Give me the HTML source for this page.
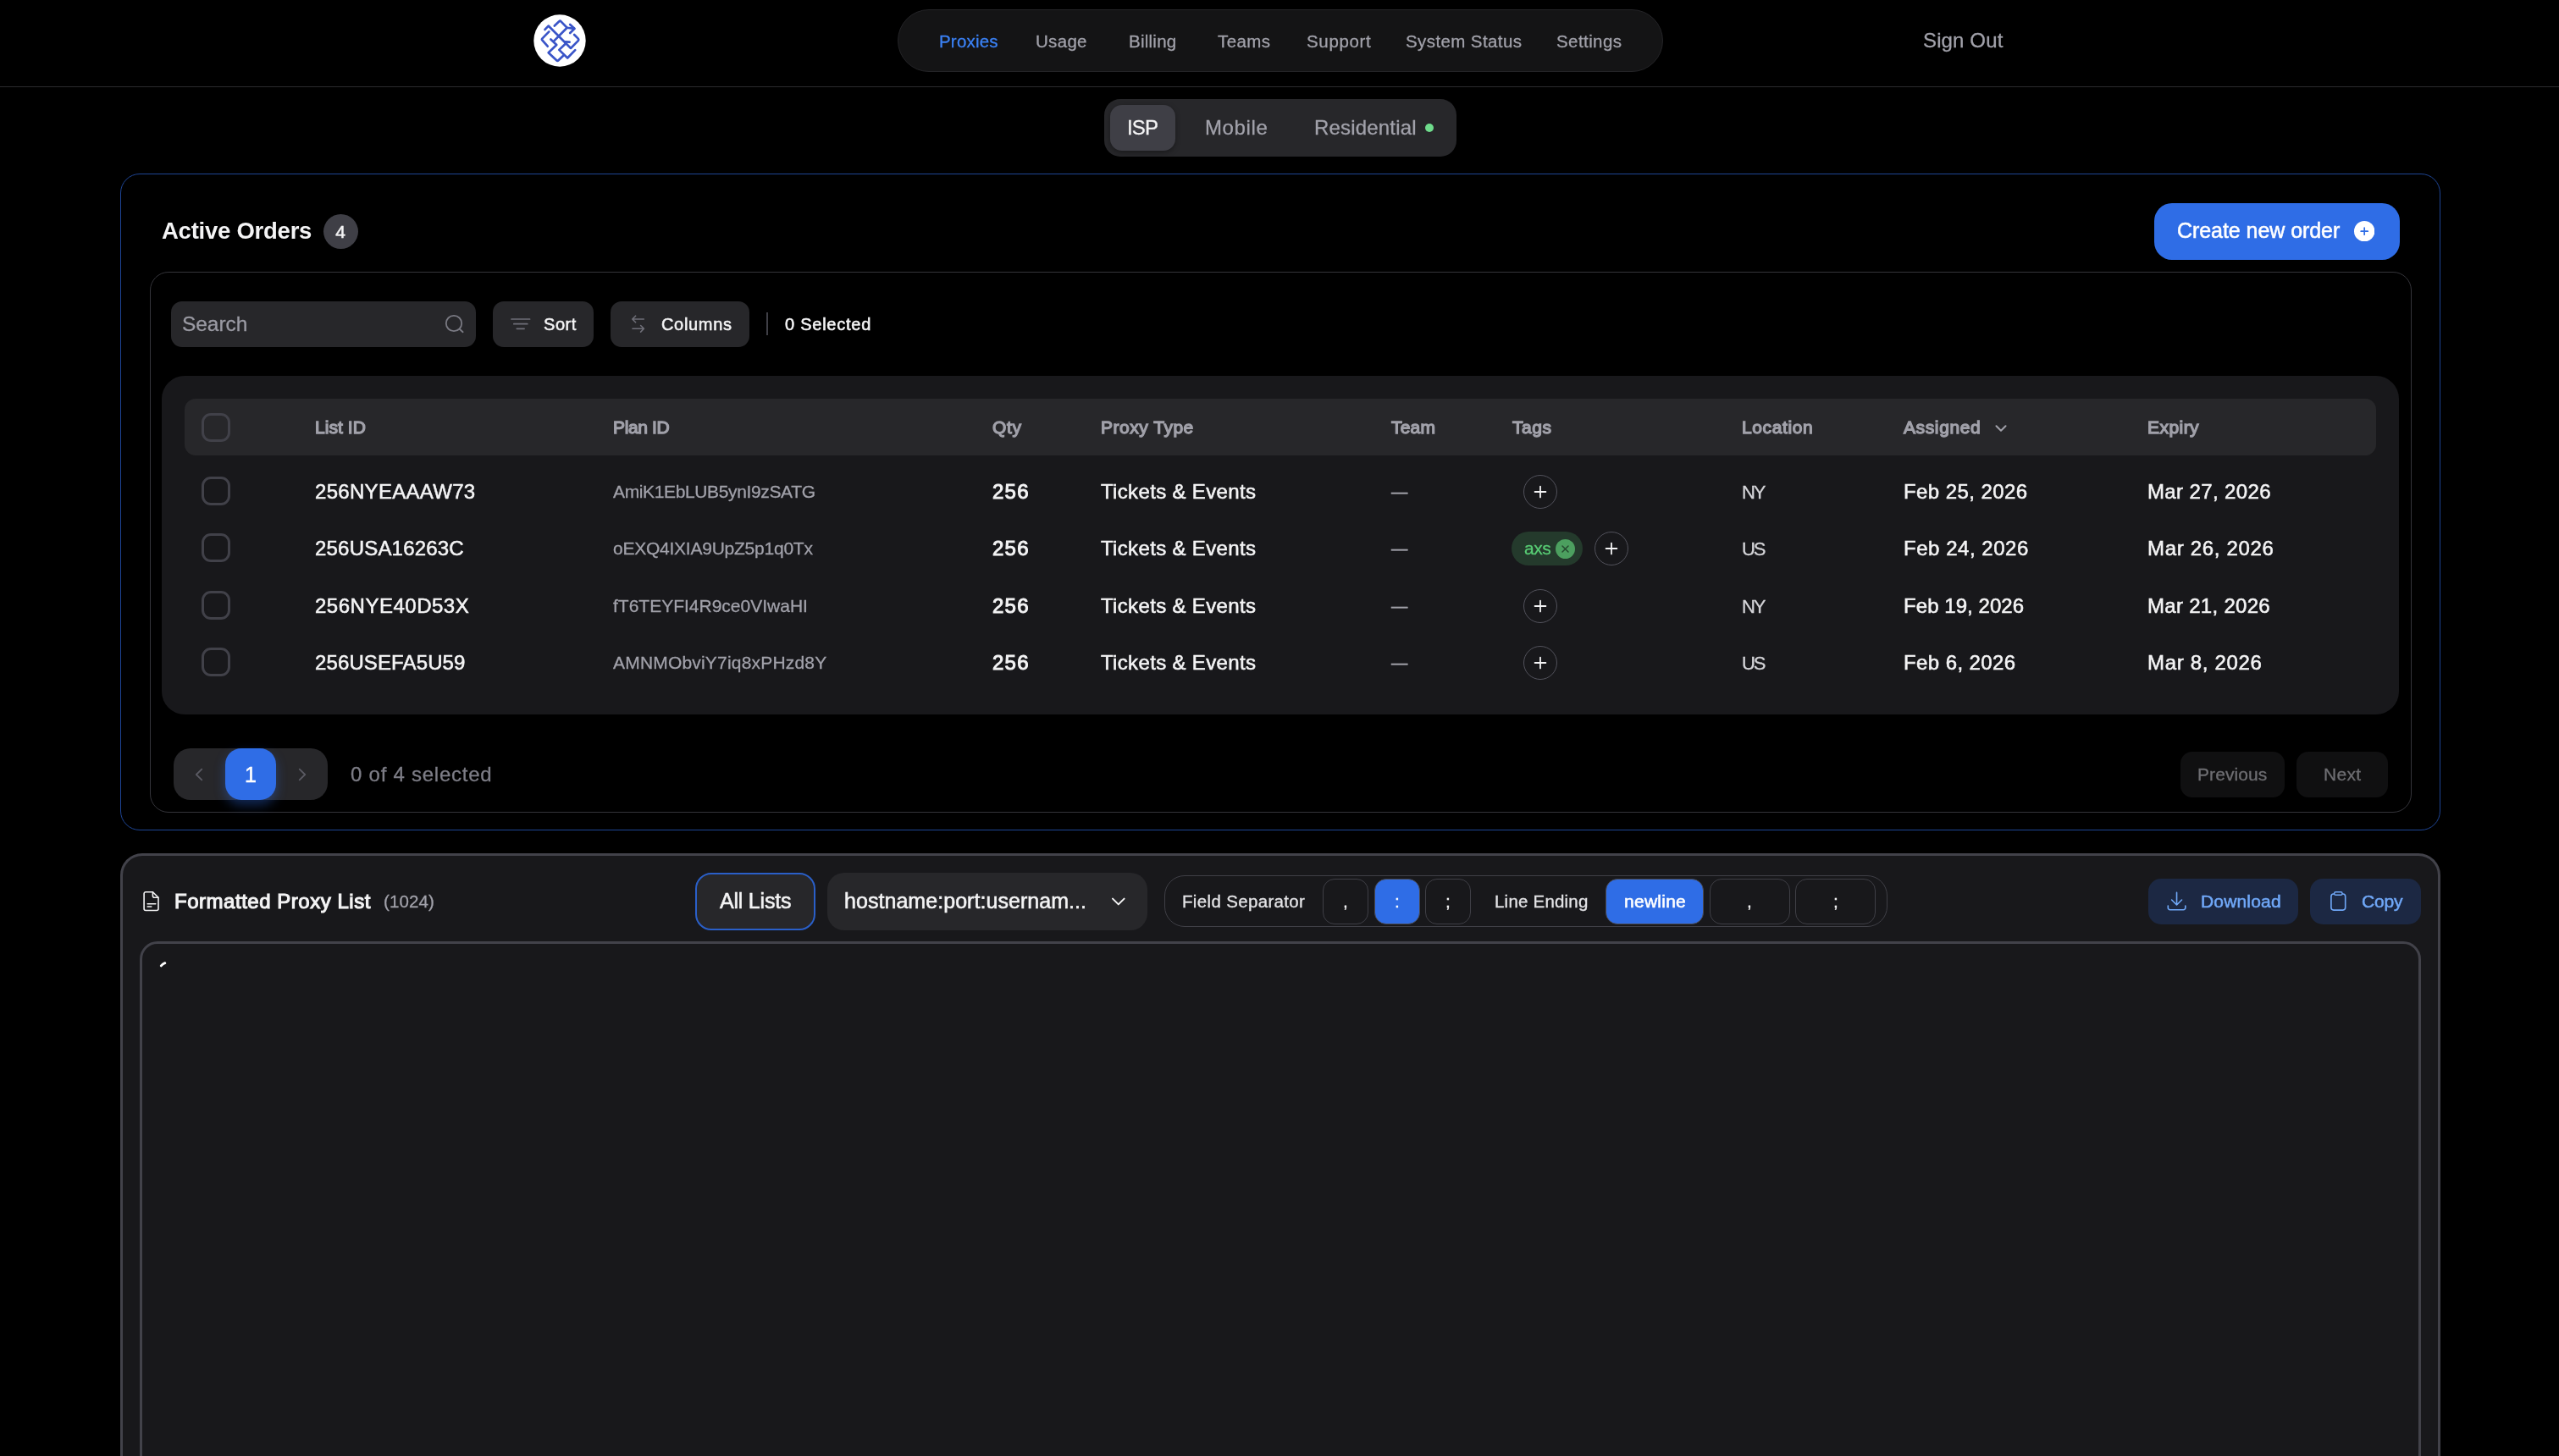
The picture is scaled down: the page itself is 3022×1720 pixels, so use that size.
<!DOCTYPE html>
<html lang="en"><head><meta charset="utf-8"><meta name="viewport" content="width=3022"><title>Proxies</title>
<style>
html,body{margin:0;padding:0;background:#000;}
body{width:3022px;height:1720px;position:relative;overflow:hidden;font-family:"Liberation Sans", sans-serif;}
.b{position:absolute;display:block;}
.t{position:absolute;white-space:nowrap;line-height:1;font-family:"Liberation Sans", sans-serif;will-change:transform;}
</style></head>
<body>
<header>
<div class="b" style="left:0.0px;top:101.5px;width:3022.0px;height:1.5px;background:#2b2b2e;"></div>
<svg class="b" style="left:630.4px;top:16.5px;" width="62" height="62" viewBox="0 0 62 62" fill="none"><circle cx="31" cy="31" r="30.7" fill="#fff"/>
<g stroke="#3a55c8" stroke-width="2.7" stroke-linecap="round" stroke-linejoin="round" fill="none" transform="translate(-10.1,-6.5) scale(0.054945)">
<g transform="scale(1)" stroke-width="49">
<path d="M430 445 L505 365 L985 845 L1140 690 Q1165 660 1140 635 L1060 555"/>
<path d="M635 365 L735 270 Q755 250 775 270 L905 405 L1060 425"/>
<path d="M970 335 L1065 425 L970 520"/>
<path d="M905 405 L625 690"/>
<path d="M555 655 L680 775 L505 940 L680 1105 Q700 1125 720 1105 L830 1000"/>
<path d="M518 490 L375 635 Q355 655 375 675 L488 805"/>
<path d="M960 712 L860 708"/>
<path d="M880 740 L735 880 L915 1055 L1080 885"/>
</g></g></svg>
<div class="b" style="left:1060.0px;top:11.0px;width:904.0px;height:73.5px;background:#141415;border-radius:37px;border:1.5px solid #242427;box-sizing:border-box;"></div>
<span class="t" style="top:39.00px;font-size:20.5px;color:#3b82f6;-webkit-text-stroke:0.3px #3b82f6;letter-spacing:0.190px;left:1108.70px;">Proxies</span>
<span class="t" style="top:39.00px;font-size:20.5px;color:#a1a1aa;-webkit-text-stroke:0.3px #a1a1aa;letter-spacing:0.309px;left:1222.50px;">Usage</span>
<span class="t" style="top:39.00px;font-size:20.5px;color:#a1a1aa;-webkit-text-stroke:0.3px #a1a1aa;letter-spacing:0.249px;left:1332.50px;">Billing</span>
<span class="t" style="top:39.00px;font-size:20.5px;color:#a1a1aa;-webkit-text-stroke:0.3px #a1a1aa;letter-spacing:0.402px;left:1437.50px;">Teams</span>
<span class="t" style="top:39.00px;font-size:20.5px;color:#a1a1aa;-webkit-text-stroke:0.3px #a1a1aa;letter-spacing:0.665px;left:1543.20px;">Support</span>
<span class="t" style="top:39.00px;font-size:20.5px;color:#a1a1aa;-webkit-text-stroke:0.3px #a1a1aa;letter-spacing:0.402px;left:1660.00px;">System Status</span>
<span class="t" style="top:39.00px;font-size:20.5px;color:#a1a1aa;-webkit-text-stroke:0.3px #a1a1aa;letter-spacing:0.417px;left:1838.00px;">Settings</span>
<span class="t" style="top:36.00px;font-size:24px;color:#a1a1aa;-webkit-text-stroke:0.3px #a1a1aa;letter-spacing:0.130px;left:2271.20px;">Sign Out</span>
</header>
<main>
<nav aria-label="Proxy type">
<div class="b" style="left:1304.0px;top:117.0px;width:416.0px;height:68.0px;background:#27272a;border-radius:19px;"></div>
<div class="b" style="left:1311.0px;top:124.0px;width:77.0px;height:54.0px;background:#3f3f46;border-radius:14px;box-shadow:0 2px 6px rgba(0,0,0,.35);"></div>
<span class="t" style="top:139.00px;font-size:24px;color:#f4f4f5;-webkit-text-stroke:0.3px #f4f4f5;left:1049.40px;width:600px;text-align:center;letter-spacing:-0.9px;">ISP</span>
<span class="t" style="top:139.00px;font-size:24px;color:#a1a1aa;-webkit-text-stroke:0.3px #a1a1aa;letter-spacing:0.619px;left:1422.50px;">Mobile</span>
<span class="t" style="top:139.00px;font-size:24px;color:#a1a1aa;-webkit-text-stroke:0.3px #a1a1aa;letter-spacing:0.177px;left:1551.50px;">Residential</span>
<div class="b" style="left:1683.0px;top:146.0px;width:10.0px;height:10.0px;background:#6fdc8c;border-radius:5px;"></div>
</nav>
<section aria-label="Active Orders">
<div class="b" style="left:142.0px;top:205.0px;width:2740.0px;height:776.0px;border-radius:23px;border:1.5px solid #1e4595;box-sizing:border-box;"></div>
<span class="t" style="top:259.00px;font-size:27.5px;color:#f4f4f5;font-weight:700;letter-spacing:-0.248px;left:190.60px;">Active Orders</span>
<div class="b" style="left:382.0px;top:253.0px;width:40.6px;height:40.6px;background:#3f3f46;border-radius:21px;"></div>
<span class="t" style="top:263.00px;font-size:21px;color:#f4f4f5;-webkit-text-stroke:0.5px #f4f4f5;left:102.30px;width:600px;text-align:center;">4</span>
<div class="b" style="left:2544.0px;top:240.0px;width:290.0px;height:66.5px;background:#2f6de6;border-radius:21px;"></div>
<span class="t" style="top:260.00px;font-size:25px;color:#ffffff;-webkit-text-stroke:0.55px #ffffff;letter-spacing:-0.057px;left:2571.00px;">Create new order</span>
<svg class="b" style="left:2780.0px;top:261.0px;" width="24.4" height="24.4" viewBox="0 0 24.4 24.4" fill="none"><circle cx="12.2" cy="12.2" r="12.2" fill="#fff"/><path d="M12.2 8.2v8M8.2 12.2h8" stroke="#2f6de6" stroke-width="1.7" stroke-linecap="round"/></svg>
<div class="b" style="left:177.0px;top:321.0px;width:2671.0px;height:638.7px;border-radius:22px;border:1.5px solid #34343a;box-sizing:border-box;"></div>
<div class="b" style="left:202.0px;top:356.0px;width:360.0px;height:53.6px;background:#27272a;border-radius:13px;"></div>
<span class="t" style="top:371.00px;font-size:24.5px;color:#9a9aa3;-webkit-text-stroke:0.3px #9a9aa3;letter-spacing:-0.048px;left:215.40px;">Search</span>
<svg class="b" style="left:524.0px;top:370.0px;" width="26" height="26" viewBox="0 0 26 26" fill="none"><circle cx="12" cy="12" r="9.2" stroke="#7a7a83" stroke-width="1.8"/><path d="M18.8 18.8l3.8 3.4" stroke="#7a7a83" stroke-width="1.9" stroke-linecap="round"/></svg>
<div class="b" style="left:582.0px;top:356.0px;width:119.0px;height:53.6px;background:#27272a;border-radius:13px;"></div>
<svg class="b" style="left:600.0px;top:370.0px;" width="30" height="26" viewBox="0 0 30 26" fill="none"><path d="M4 7h21.6M6.8 12.7h16M10.3 18.3h8.8" stroke="#6f6f78" stroke-width="1.7" stroke-linecap="round"/></svg>
<span class="t" style="top:373.00px;font-size:20px;color:#f4f4f5;-webkit-text-stroke:0.55px #f4f4f5;letter-spacing:0.571px;left:641.60px;">Sort</span>
<div class="b" style="left:721.0px;top:356.0px;width:164.0px;height:53.6px;background:#27272a;border-radius:13px;"></div>
<svg class="b" style="left:742.0px;top:368.0px;" width="24" height="28" viewBox="0 0 24 28" fill="none"><path d="M18.3 9H5M8.6 5.2L4.8 9l3.8 3.8M5 20.3h13.3M14.6 16.5l3.8 3.8-3.8 3.8" stroke="#6f6f78" stroke-width="1.6" stroke-linecap="round" stroke-linejoin="round"/></svg>
<span class="t" style="top:373.00px;font-size:20px;color:#f4f4f5;-webkit-text-stroke:0.55px #f4f4f5;letter-spacing:0.680px;left:780.90px;">Columns</span>
<div class="b" style="left:905.0px;top:369.3px;width:1.8px;height:26.5px;background:#3f3f46;"></div>
<span class="t" style="top:373.00px;font-size:20px;color:#f4f4f5;-webkit-text-stroke:0.55px #f4f4f5;letter-spacing:0.754px;left:927.40px;">0 Selected</span>
<div class="b" style="left:191.0px;top:444.0px;width:2641.5px;height:399.5px;background:#18181b;border-radius:27px;"></div>
<div class="b" style="left:218.0px;top:471.0px;width:2588.0px;height:66.5px;background:#27272a;border-radius:13px;"></div>
<div class="b" style="left:238.0px;top:488.0px;width:34.0px;height:34.0px;border-radius:11px;border:3px solid #414149;box-sizing:border-box;"></div>
<span class="t" style="top:494.00px;font-size:21px;color:#a1a1aa;-webkit-text-stroke:1.3px #a1a1aa;letter-spacing:0.047px;left:372.10px;">List ID</span>
<span class="t" style="top:494.00px;font-size:21px;color:#a1a1aa;-webkit-text-stroke:1.3px #a1a1aa;letter-spacing:-0.379px;left:723.80px;">Plan ID</span>
<span class="t" style="top:494.00px;font-size:21px;color:#a1a1aa;-webkit-text-stroke:1.3px #a1a1aa;letter-spacing:0.614px;left:1171.70px;">Qty</span>
<span class="t" style="top:494.00px;font-size:21px;color:#a1a1aa;-webkit-text-stroke:1.3px #a1a1aa;letter-spacing:0.514px;left:1299.80px;">Proxy Type</span>
<span class="t" style="top:494.00px;font-size:21px;color:#a1a1aa;-webkit-text-stroke:1.3px #a1a1aa;letter-spacing:0.214px;left:1642.70px;">Team</span>
<span class="t" style="top:494.00px;font-size:21px;color:#a1a1aa;-webkit-text-stroke:1.3px #a1a1aa;letter-spacing:0.547px;left:1786.20px;">Tags</span>
<span class="t" style="top:494.00px;font-size:21px;color:#a1a1aa;-webkit-text-stroke:1.3px #a1a1aa;letter-spacing:0.628px;left:2057.30px;">Location</span>
<span class="t" style="top:494.00px;font-size:21px;color:#a1a1aa;-webkit-text-stroke:1.3px #a1a1aa;letter-spacing:0.616px;left:2248.40px;">Assigned</span>
<span class="t" style="top:494.00px;font-size:21px;color:#a1a1aa;-webkit-text-stroke:1.3px #a1a1aa;letter-spacing:0.448px;left:2536.00px;">Expiry</span>
<svg class="b" style="left:2355.0px;top:499.0px;" width="16" height="14" viewBox="0 0 16 14" fill="none"><path d="M2.5 4.2L8 9.7l5.5-5.5" stroke="#a1a1aa" stroke-width="2" stroke-linecap="round" stroke-linejoin="round"/></svg>
<div class="b" style="left:238.0px;top:563.0px;width:34.0px;height:34.0px;border-radius:11px;border:3px solid #414149;box-sizing:border-box;"></div>
<span class="t" style="top:569.00px;font-size:24px;color:#f4f4f5;-webkit-text-stroke:0.55px #f4f4f5;letter-spacing:0.302px;left:372.10px;">256NYEAAAW73</span>
<span class="t" style="top:570.00px;font-size:21px;color:#a1a1aa;-webkit-text-stroke:0.3px #a1a1aa;letter-spacing:-0.363px;left:724.20px;">AmiK1EbLUB5ynI9zSATG</span>
<span class="t" style="top:569.00px;font-size:24px;color:#f4f4f5;-webkit-text-stroke:1.0px #f4f4f5;letter-spacing:1.227px;left:1171.70px;">256</span>
<span class="t" style="top:569.00px;font-size:24px;color:#f4f4f5;-webkit-text-stroke:0.55px #f4f4f5;letter-spacing:0.337px;left:1299.80px;">Tickets &amp; Events</span>
<span class="t" style="top:572.00px;font-size:19.3px;color:#a1a1aa;-webkit-text-stroke:0.55px #a1a1aa;left:1642.70px;">—</span>
<span class="t" style="top:571.00px;font-size:22px;color:#d4d4d8;-webkit-text-stroke:0.3px #d4d4d8;letter-spacing:-2.062px;left:2057.30px;">NY</span>
<span class="t" style="top:569.00px;font-size:24px;color:#f4f4f5;-webkit-text-stroke:0.55px #f4f4f5;letter-spacing:0.432px;left:2248.40px;">Feb 25, 2026</span>
<span class="t" style="top:569.00px;font-size:24px;color:#f4f4f5;-webkit-text-stroke:0.55px #f4f4f5;letter-spacing:0.371px;left:2536.00px;">Mar 27, 2026</span>
<div class="b" style="left:1799.0px;top:560.9px;width:40.0px;height:40.0px;border-radius:20px;border:1.5px solid #52525b;box-sizing:border-box;"></div>
<svg class="b" style="left:1811.0px;top:572.9px;" width="16" height="16" viewBox="0 0 16 16" fill="none"><path d="M8 1.6v12.8M1.6 8h12.8" stroke="#f4f4f5" stroke-width="1.8" stroke-linecap="round"/></svg>
<div class="b" style="left:238.0px;top:630.2px;width:34.0px;height:34.0px;border-radius:11px;border:3px solid #414149;box-sizing:border-box;"></div>
<span class="t" style="top:636.00px;font-size:24px;color:#f4f4f5;-webkit-text-stroke:0.55px #f4f4f5;letter-spacing:0.203px;left:372.10px;">256USA16263C</span>
<span class="t" style="top:637.00px;font-size:21px;color:#a1a1aa;-webkit-text-stroke:0.3px #a1a1aa;letter-spacing:-0.240px;left:724.20px;">oEXQ4IXIA9UpZ5p1q0Tx</span>
<span class="t" style="top:636.00px;font-size:24px;color:#f4f4f5;-webkit-text-stroke:1.0px #f4f4f5;letter-spacing:1.227px;left:1171.70px;">256</span>
<span class="t" style="top:636.00px;font-size:24px;color:#f4f4f5;-webkit-text-stroke:0.55px #f4f4f5;letter-spacing:0.337px;left:1299.80px;">Tickets &amp; Events</span>
<span class="t" style="top:639.00px;font-size:19.3px;color:#a1a1aa;-webkit-text-stroke:0.55px #a1a1aa;left:1642.70px;">—</span>
<span class="t" style="top:638.00px;font-size:22px;color:#d4d4d8;-webkit-text-stroke:0.3px #d4d4d8;letter-spacing:-2.062px;left:2057.30px;">US</span>
<span class="t" style="top:636.00px;font-size:24px;color:#f4f4f5;-webkit-text-stroke:0.55px #f4f4f5;letter-spacing:0.532px;left:2248.40px;">Feb 24, 2026</span>
<span class="t" style="top:636.00px;font-size:24px;color:#f4f4f5;-webkit-text-stroke:0.55px #f4f4f5;letter-spacing:0.671px;left:2536.00px;">Mar 26, 2026</span>
<div class="b" style="left:1785.0px;top:628.2px;width:84.0px;height:40.0px;background:#243a2c;border-radius:20px;"></div>
<span class="t" style="top:637.00px;font-size:21px;color:#58cc74;-webkit-text-stroke:0.3px #58cc74;letter-spacing:-0.444px;left:1799.50px;">axs</span>
<svg class="b" style="left:1836.9px;top:637.1px;" width="23" height="23" viewBox="0 0 23 23" fill="none"><circle cx="11.5" cy="11.5" r="11.5" fill="#4c9f5f"/><path d="M8 8l7 7M15 8l-7 7" stroke="#25492f" stroke-width="1.5" stroke-linecap="round"/></svg>
<div class="b" style="left:1883.0px;top:628.2px;width:40.0px;height:40.0px;border-radius:20px;border:1.5px solid #52525b;box-sizing:border-box;"></div>
<svg class="b" style="left:1895.0px;top:640.2px;" width="16" height="16" viewBox="0 0 16 16" fill="none"><path d="M8 1.6v12.8M1.6 8h12.8" stroke="#f4f4f5" stroke-width="1.8" stroke-linecap="round"/></svg>
<div class="b" style="left:238.0px;top:697.6px;width:34.0px;height:34.0px;border-radius:11px;border:3px solid #414149;box-sizing:border-box;"></div>
<span class="t" style="top:704.00px;font-size:24px;color:#f4f4f5;-webkit-text-stroke:0.55px #f4f4f5;letter-spacing:0.507px;left:372.10px;">256NYE40D53X</span>
<span class="t" style="top:705.00px;font-size:21px;color:#a1a1aa;-webkit-text-stroke:0.3px #a1a1aa;left:724.20px;">fT6TEYFI4R9ce0VIwaHI</span>
<span class="t" style="top:704.00px;font-size:24px;color:#f4f4f5;-webkit-text-stroke:1.0px #f4f4f5;letter-spacing:1.227px;left:1171.70px;">256</span>
<span class="t" style="top:704.00px;font-size:24px;color:#f4f4f5;-webkit-text-stroke:0.55px #f4f4f5;letter-spacing:0.337px;left:1299.80px;">Tickets &amp; Events</span>
<span class="t" style="top:707.00px;font-size:19.3px;color:#a1a1aa;-webkit-text-stroke:0.55px #a1a1aa;left:1642.70px;">—</span>
<span class="t" style="top:706.00px;font-size:22px;color:#d4d4d8;-webkit-text-stroke:0.3px #d4d4d8;letter-spacing:-2.062px;left:2057.30px;">NY</span>
<span class="t" style="top:704.00px;font-size:24px;color:#f4f4f5;-webkit-text-stroke:0.55px #f4f4f5;letter-spacing:0.059px;left:2248.40px;">Feb 19, 2026</span>
<span class="t" style="top:704.00px;font-size:24px;color:#f4f4f5;-webkit-text-stroke:0.55px #f4f4f5;letter-spacing:0.298px;left:2536.00px;">Mar 21, 2026</span>
<div class="b" style="left:1799.0px;top:695.5px;width:40.0px;height:40.0px;border-radius:20px;border:1.5px solid #52525b;box-sizing:border-box;"></div>
<svg class="b" style="left:1811.0px;top:707.5px;" width="16" height="16" viewBox="0 0 16 16" fill="none"><path d="M8 1.6v12.8M1.6 8h12.8" stroke="#f4f4f5" stroke-width="1.8" stroke-linecap="round"/></svg>
<div class="b" style="left:238.0px;top:764.9px;width:34.0px;height:34.0px;border-radius:11px;border:3px solid #414149;box-sizing:border-box;"></div>
<span class="t" style="top:771.00px;font-size:24px;color:#f4f4f5;-webkit-text-stroke:0.55px #f4f4f5;letter-spacing:0.117px;left:372.10px;">256USEFA5U59</span>
<span class="t" style="top:772.00px;font-size:21px;color:#a1a1aa;-webkit-text-stroke:0.3px #a1a1aa;letter-spacing:0.190px;left:724.20px;">AMNMObviY7iq8xPHzd8Y</span>
<span class="t" style="top:771.00px;font-size:24px;color:#f4f4f5;-webkit-text-stroke:1.0px #f4f4f5;letter-spacing:1.227px;left:1171.70px;">256</span>
<span class="t" style="top:771.00px;font-size:24px;color:#f4f4f5;-webkit-text-stroke:0.55px #f4f4f5;letter-spacing:0.337px;left:1299.80px;">Tickets &amp; Events</span>
<span class="t" style="top:774.00px;font-size:19.3px;color:#a1a1aa;-webkit-text-stroke:0.55px #a1a1aa;left:1642.70px;">—</span>
<span class="t" style="top:773.00px;font-size:22px;color:#d4d4d8;-webkit-text-stroke:0.3px #d4d4d8;letter-spacing:-2.062px;left:2057.30px;">US</span>
<span class="t" style="top:771.00px;font-size:24px;color:#f4f4f5;-webkit-text-stroke:0.55px #f4f4f5;letter-spacing:0.409px;left:2248.40px;">Feb 6, 2026</span>
<span class="t" style="top:771.00px;font-size:24px;color:#f4f4f5;-webkit-text-stroke:0.55px #f4f4f5;letter-spacing:0.672px;left:2536.00px;">Mar 8, 2026</span>
<div class="b" style="left:1799.0px;top:762.8px;width:40.0px;height:40.0px;border-radius:20px;border:1.5px solid #52525b;box-sizing:border-box;"></div>
<svg class="b" style="left:1811.0px;top:774.8px;" width="16" height="16" viewBox="0 0 16 16" fill="none"><path d="M8 1.6v12.8M1.6 8h12.8" stroke="#f4f4f5" stroke-width="1.8" stroke-linecap="round"/></svg>
<div class="b" style="left:205.0px;top:884.0px;width:182.0px;height:60.6px;background:#27272a;border-radius:20px;"></div>
<div class="b" style="left:266.0px;top:884.0px;width:60.0px;height:60.6px;background:#2f6de6;border-radius:19px;box-shadow:0 6px 13px rgba(47,109,230,.38);"></div>
<span class="t" style="top:903.00px;font-size:25px;color:#ffffff;-webkit-text-stroke:0.5px #ffffff;left:-4.00px;width:600px;text-align:center;">1</span>
<svg class="b" style="left:226.0px;top:904.0px;" width="18" height="22" viewBox="0 0 18 22" fill="none"><path d="M12.3 4.6L5.8 11l6.5 6.4" stroke="#5a5a63" stroke-width="1.8" stroke-linecap="round" stroke-linejoin="round"/></svg>
<svg class="b" style="left:348.0px;top:904.0px;" width="18" height="22" viewBox="0 0 18 22" fill="none"><path d="M5.7 4.6L12.2 11l-6.5 6.4" stroke="#5a5a63" stroke-width="1.8" stroke-linecap="round" stroke-linejoin="round"/></svg>
<span class="t" style="top:903.00px;font-size:24px;color:#7d7d86;-webkit-text-stroke:0.3px #7d7d86;letter-spacing:0.756px;left:414.20px;">0 of 4 selected</span>
<div class="b" style="left:2575.0px;top:888.0px;width:123.0px;height:54.0px;background:#101011;border-radius:14px;"></div>
<span class="t" style="top:904.00px;font-size:21px;color:#6e6e72;-webkit-text-stroke:0.3px #6e6e72;letter-spacing:0.085px;left:2595.00px;">Previous</span>
<div class="b" style="left:2712.0px;top:888.0px;width:108.0px;height:54.0px;background:#101011;border-radius:14px;"></div>
<span class="t" style="top:904.00px;font-size:21px;color:#6e6e72;-webkit-text-stroke:0.3px #6e6e72;letter-spacing:0.271px;left:2743.80px;">Next</span>
</section>
<section aria-label="Formatted Proxy List">
<div class="b" style="left:142.3px;top:1007.5px;width:2739.7px;height:792.5px;background:#18181b;border-radius:26px;border:3px solid #42424a;box-sizing:border-box;"></div>
<svg class="b" style="left:166.0px;top:1050.0px;" width="26" height="30" viewBox="0 0 26 30" fill="none"><path d="M4.1 5.7a2 2 0 0 1 2-2h8.3l6.6 6.6v13.2a2 2 0 0 1-2 2H6.1a2 2 0 0 1-2-2z" stroke="#f4f4f5" stroke-width="1.6" stroke-linejoin="round"/><path d="M14.4 3.9v4.4a2 2 0 0 0 2 2h4.4M8.2 17.8h9.6M8.2 21h4.6" stroke="#f4f4f5" stroke-width="1.6" stroke-linecap="round" stroke-linejoin="round"/></svg>
<span class="t" style="top:1053.00px;font-size:24px;color:#f4f4f5;-webkit-text-stroke:1.1px #f4f4f5;letter-spacing:0.526px;left:206.00px;">Formatted Proxy List</span>
<span class="t" style="top:1055.00px;font-size:20.5px;color:#a1a1aa;-webkit-text-stroke:0.3px #a1a1aa;letter-spacing:0.107px;left:452.50px;">(1024)</span>
<div class="b" style="left:821.0px;top:1031.0px;width:142.0px;height:68.0px;background:#27272a;border-radius:19px;border:2px solid #2a5fc8;box-sizing:border-box;"></div>
<span class="t" style="top:1052.00px;font-size:25px;color:#f4f4f5;-webkit-text-stroke:0.55px #f4f4f5;letter-spacing:-0.218px;left:850.00px;">All Lists</span>
<div class="b" style="left:977.0px;top:1031.0px;width:378.0px;height:68.0px;background:#27272a;border-radius:20px;"></div>
<span class="t" style="top:1052.00px;font-size:25px;color:#f4f4f5;-webkit-text-stroke:0.55px #f4f4f5;letter-spacing:0.049px;left:997.00px;">hostname:port:usernam...</span>
<svg class="b" style="left:1310.0px;top:1056.0px;" width="22" height="18" viewBox="0 0 22 18" fill="none"><path d="M4 5.6l6.8 6.8 6.8-6.8" stroke="#f4f4f5" stroke-width="2" stroke-linecap="round" stroke-linejoin="round"/></svg>
<div class="b" style="left:1375.0px;top:1034.0px;width:854.0px;height:61.4px;border-radius:24px;border:1.3px solid #3f3f46;box-sizing:border-box;"></div>
<span class="t" style="top:1055.00px;font-size:20.5px;color:#e4e4e7;-webkit-text-stroke:0.3px #e4e4e7;letter-spacing:0.338px;left:1396.20px;">Field Separator</span>
<div class="b" style="left:1562.2px;top:1038.0px;width:53.6px;height:54.0px;border-radius:14px;border:1.3px solid #3f3f46;box-sizing:border-box;"></div>
<span class="t" style="top:1054.00px;font-size:21px;color:#f4f4f5;-webkit-text-stroke:0.3px #f4f4f5;left:1289.00px;width:600px;text-align:center;">,</span>
<div class="b" style="left:1623.0px;top:1038.0px;width:54.0px;height:54.0px;background:#2f6de6;border-radius:14px;border:1.3px solid #4a4a52;box-sizing:border-box;"></div>
<span class="t" style="top:1054.00px;font-size:21px;color:#ffffff;-webkit-text-stroke:0.3px #ffffff;left:1350.00px;width:600px;text-align:center;">:</span>
<div class="b" style="left:1683.2px;top:1038.0px;width:53.8px;height:54.0px;border-radius:14px;border:1.3px solid #3f3f46;box-sizing:border-box;"></div>
<span class="t" style="top:1054.00px;font-size:21px;color:#f4f4f5;-webkit-text-stroke:0.3px #f4f4f5;left:1410.10px;width:600px;text-align:center;">;</span>
<span class="t" style="top:1055.00px;font-size:20.5px;color:#e4e4e7;-webkit-text-stroke:0.3px #e4e4e7;letter-spacing:0.210px;left:1765.20px;">Line Ending</span>
<div class="b" style="left:1896.0px;top:1038.0px;width:115.8px;height:54.0px;background:#2f6de6;border-radius:14px;border:1.3px solid #4a4a52;box-sizing:border-box;"></div>
<span class="t" style="top:1054.00px;font-size:21px;color:#ffffff;-webkit-text-stroke:0.55px #ffffff;letter-spacing:0.264px;left:1917.80px;">newline</span>
<div class="b" style="left:2019.0px;top:1038.0px;width:94.8px;height:54.0px;border-radius:14px;border:1.3px solid #3f3f46;box-sizing:border-box;"></div>
<span class="t" style="top:1054.00px;font-size:21px;color:#f4f4f5;-webkit-text-stroke:0.3px #f4f4f5;left:1766.40px;width:600px;text-align:center;">,</span>
<div class="b" style="left:2120.0px;top:1038.0px;width:95.0px;height:54.0px;border-radius:14px;border:1.3px solid #3f3f46;box-sizing:border-box;"></div>
<span class="t" style="top:1054.00px;font-size:21px;color:#f4f4f5;-webkit-text-stroke:0.3px #f4f4f5;left:1867.50px;width:600px;text-align:center;">;</span>
<div class="b" style="left:2537.0px;top:1038.0px;width:177.0px;height:54.0px;background:#1c2843;border-radius:15px;"></div>
<svg class="b" style="left:2557.0px;top:1051.0px;" width="28" height="28" viewBox="0 0 28 28" fill="none"><path d="M13.55 3.4v14.4M7.6 12l5.95 5.95L19.5 12M3.3 19v2.4a2.3 2.3 0 0 0 2.3 2.3h15.9a2.3 2.3 0 0 0 2.3-2.3V19" stroke="#70a8f8" stroke-width="1.6" stroke-linecap="round" stroke-linejoin="round"/></svg>
<span class="t" style="top:1054.00px;font-size:21px;color:#70a8f8;-webkit-text-stroke:0.55px #70a8f8;letter-spacing:0.171px;left:2598.60px;">Download</span>
<div class="b" style="left:2728.0px;top:1038.0px;width:131.0px;height:54.0px;background:#1c2843;border-radius:15px;"></div>
<svg class="b" style="left:2749.0px;top:1051.0px;" width="24" height="28" viewBox="0 0 24 28" fill="none"><rect x="3.9" y="5" width="16.8" height="19.1" rx="3" stroke="#70a8f8" stroke-width="1.6"/><rect x="7.7" y="2.7" width="9.3" height="3.6" rx="1.6" stroke="#70a8f8" stroke-width="1.5" fill="#1c2843"/></svg>
<span class="t" style="top:1054.00px;font-size:21px;color:#70a8f8;-webkit-text-stroke:0.55px #70a8f8;letter-spacing:-0.177px;left:2789.20px;">Copy</span>
<div class="b" style="left:165.0px;top:1112.0px;width:2694.0px;height:688.0px;background:#18181b;border-radius:21px;border:3px solid #42424a;box-sizing:border-box;"></div>
<svg class="b" style="left:186.0px;top:1132.0px;" width="16" height="14" viewBox="0 0 16 14" fill="none"><path d="M4.3 8.9Q6.3 6.6 8.8 5.7" stroke="#fff" stroke-width="2.9" stroke-linecap="round"/></svg>
</section>
</main>
<script>(function(){var w=window.innerWidth||0;if(w>0&&Math.abs(w-3022)>1){document.body.style.zoom=(w/3022);}})();</script>
</body></html>
